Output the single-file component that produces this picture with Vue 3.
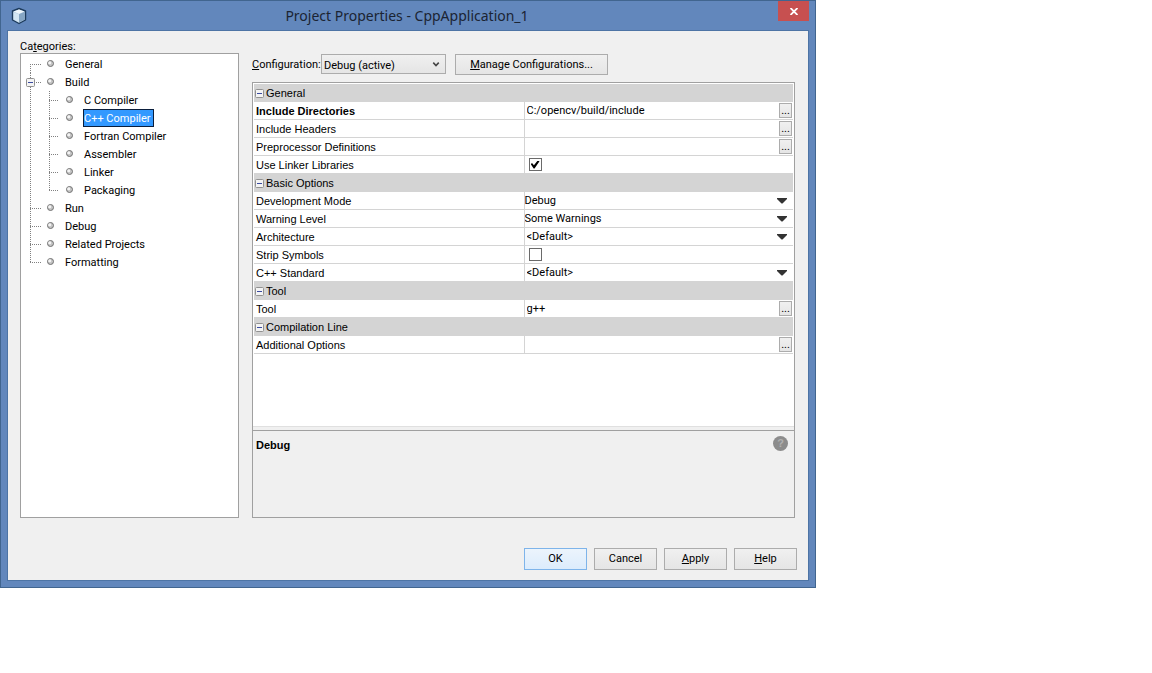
<script setup>
import { ref } from 'vue'

const categories = [
  { name: 'General', depth: 0, first: true },
  { name: 'Build', depth: 0, open: true },
  { name: 'C Compiler', depth: 1 },
  { name: 'C++ Compiler', depth: 1 },
  { name: 'Fortran Compiler', depth: 1 },
  { name: 'Assembler', depth: 1 },
  { name: 'Linker', depth: 1 },
  { name: 'Packaging', depth: 1, last: true },
  { name: 'Run', depth: 0 },
  { name: 'Debug', depth: 0 },
  { name: 'Related Projects', depth: 0 },
  { name: 'Formatting', depth: 0, last: true },
]
const selected = ref('C++ Compiler')
const configuration = ref('Debug (active)')

const groups = ref([
  {
    title: 'General',
    rows: [
      { id: 'include-dirs', label: 'Include Directories', type: 'text', value: 'C:/opencv/build/include', changed: true },
      { id: 'include-headers', label: 'Include Headers', type: 'text', value: '' },
      { id: 'preprocessor', label: 'Preprocessor Definitions', type: 'text', value: '' },
      { id: 'linker-libs', label: 'Use Linker Libraries', type: 'check', value: true },
    ],
  },
  {
    title: 'Basic Options',
    rows: [
      { id: 'dev-mode', label: 'Development Mode', type: 'select', value: 'Debug' },
      { id: 'warnings', label: 'Warning Level', type: 'select', value: 'Some Warnings' },
      { id: 'arch', label: 'Architecture', type: 'select', value: '<Default>' },
      { id: 'strip', label: 'Strip Symbols', type: 'check', value: false },
      { id: 'standard', label: 'C++ Standard', type: 'select', value: '<Default>' },
    ],
  },
  { title: 'Tool', rows: [{ id: 'tool', label: 'Tool', type: 'text', value: 'g++' }] },
  { title: 'Compilation Line', rows: [{ id: 'extra', label: 'Additional Options', type: 'text', value: '' }] },
])
</script>

<template>
  <main class="dialog">
    <header class="titlebar">
      <svg class="app-icon" width="18" height="18" viewBox="0 0 18 18">
        <path d="M9 1.500 15.500 4v9L9 16.500 2.500 13V4z" fill="#a9c3da" stroke="#1d3b5c" stroke-width="1.400" stroke-linejoin="round" />
        <path d="M9 2.500 14.500 4.500 9 7 3.500 4.500z" fill="#eef6fb" />
        <path d="M3.500 5 9 7.300V15.500L3.500 12.500z" fill="#d3e6f3" />
        <path d="M14.500 5 9 7.300V15.500l5.500-3z" fill="#86a6c4" />
      </svg>
      <h1>Project Properties - CppApplication_1</h1>
      <button class="close" aria-label="Close">
        <svg width="8" height="7" viewBox="0 0 8 7"><path d="M.5 0 7.500 7M7.500 0 .5 7" stroke="#fff" stroke-width="1.800" /></svg>
      </button>
    </header>

    <div class="client">
      <div class="columns">
        <nav class="categories" aria-labelledby="cat-label">
          <span id="cat-label" class="cat-label">Ca<u>t</u>egories:</span>
          <ul class="tree">
            <li v-for="c in categories" :key="c.name">
              <svg v-if="c.depth === 0" width="43" height="18" viewBox="0 0 43 18">
                <g stroke="#808080" stroke-dasharray="1 1" fill="none">
                  <path :d="c.first ? 'M9.500 9V18' : c.last ? 'M9.500 0V9' : 'M9.500 0V18'" />
                  <path d="M9 9.500H21" />
                </g>
                <g v-if="c.open">
                  <rect x="5.500" y="5.500" width="8" height="8" rx="1" fill="#f4f4f4" stroke="#919191" />
                  <path d="M7 9.500h5" stroke="#3a4aa0" />
                </g>
                <circle cx="29.500" cy="8.500" r="3" fill="#c4c4c4" stroke="#727272" />
                <circle cx="28.700" cy="7.700" r="1.500" fill="#f4f4f4" />
              </svg>
              <svg v-else width="62" height="18" viewBox="0 0 62 18">
                <g stroke="#808080" stroke-dasharray="1 1" fill="none">
                  <path d="M9.500 0V18" />
                  <path :d="c.last ? 'M28.500 0V9' : 'M28.500 0V18'" />
                  <path d="M28 9.500H38" />
                </g>
                <circle cx="48.500" cy="8.500" r="3" fill="#c4c4c4" stroke="#727272" />
                <circle cx="47.700" cy="7.700" r="1.500" fill="#f4f4f4" />
              </svg>
              <button class="node" :class="{ selected: selected === c.name }" @click="selected = c.name">{{ c.name }}</button>
            </li>
          </ul>
        </nav>

        <section class="settings">
          <div class="config">
            <label for="configuration"><u>C</u>onfiguration:</label>
            <span class="combo">
              <select id="configuration" v-model="configuration"><option>Debug (active)</option></select>
              <svg width="8" height="6" viewBox="0 0 8 6"><path d="M.7.8 4 4.300 7.300.8" fill="none" stroke="#444" stroke-width="1.900" /></svg>
            </span>
            <button class="btn manage"><span><u>M</u>anage Configurations...</span></button>
          </div>

          <div class="sheet">
            <div class="sheet-body">
              <table>
                <colgroup><col class="name-col" /><col /></colgroup>
                <tbody v-for="g in groups" :key="g.title">
                  <tr class="group">
                    <th colspan="2">
                      <div class="group-title">
                        <svg width="9" height="9" viewBox="0 0 9 9">
                          <rect x=".5" y=".5" width="8" height="8" rx="1" fill="#f4f4f4" stroke="#919191" />
                          <path d="M2 4.500h5" stroke="#3a4aa0" />
                        </svg>
                        {{ g.title }}
                      </div>
                    </th>
                  </tr>
                  <tr v-for="r in g.rows" :key="r.id">
                    <td class="name" :class="{ changed: r.changed }"><label :for="r.id">{{ r.label }}</label></td>
                    <td class="value">
                      <div class="cell" :class="r.type">
                        <template v-if="r.type === 'text'">
                          <input :id="r.id" v-model="r.value" type="text" />
                          <button class="more" :aria-label="'Edit ' + r.label">...</button>
                        </template>
                        <template v-else-if="r.type === 'select'">
                          <select :id="r.id" v-model="r.value" :class="{ inherited: r.value === '<Default>' }"><option>{{ r.value }}</option></select>
                          <svg width="10" height="6" viewBox="0 0 10 6"><path d="M0 0h10v1L5.500 5.500h-1L0 1z" fill="#333" /></svg>
                        </template>
                        <input v-else :id="r.id" v-model="r.value" type="checkbox" />
                      </div>
                    </td>
                  </tr>
                </tbody>
              </table>
            </div>
            <div class="description">
              <strong>Debug</strong>
              <button class="help" aria-label="Help on property">?</button>
            </div>
          </div>
        </section>
      </div>

      <footer class="actions">
        <button class="btn primary">OK</button>
        <button class="btn">Cancel</button>
        <button class="btn"><span><u>A</u>pply</span></button>
        <button class="btn"><span><u>H</u>elp</span></button>
      </footer>
    </div>
  </main>
</template>

<style>
body { background: #fff; }
</style>

<style scoped>
* { box-sizing: border-box; }
.dialog {
  max-width: 816px;
  padding: 0 6px 6px;
  border: 1px solid #41658f;
  background: #6287bc;
  color: #000;
  font: 11px/18px Roboto, "Open Sans", sans-serif;
}
button, input, select { font: inherit; color: inherit; margin: 0; padding: 0; border: 0; border-radius: 0; }
svg { display: block; flex: none; }
u { text-underline-offset: 1px; }

.titlebar { display: flex; align-items: center; height: 29px; padding-left: 3px; }
h1 { flex: 1; margin: 0; padding-left: 8px; text-align: center; color: #1b2433; font: 14px/20px "Noto Sans", "Open Sans", sans-serif; }
.close { display: flex; align-items: center; justify-content: center; align-self: flex-start; width: 31px; height: 20px; background: #c75050; }

.client { padding: 7px 11px 10px 12px; border: 1px solid #4d74a5; background: #f0f0f0; }
.columns { display: flex; gap: 13px; }
.categories { display: flex; flex-direction: column; flex: none; width: 219px; }
.cat-label { height: 15px; }
.tree { flex: 1; margin: 0; padding: 1px 0; list-style: none; background: #fff; border: 1px solid #a0a0a0; }
.tree li { display: flex; align-items: center; height: 18px; }
.node { height: 18px; padding: 2px 2px 0 0; border: 1px solid transparent; background: none; line-height: 14px; }
.node.selected { background: #3399ff; border-color: #0a1e3c; color: #fff; }

.settings { flex: 1; min-width: 0; padding-top: 16px; padding-right: 2px; }
.config { display: flex; align-items: flex-start; height: 21px; margin-bottom: 7px; }
.config label { width: 69px; line-height: 21px; white-space: nowrap; }
.combo { display: grid; width: 125px; height: 20px; align-items: center; border: 1px solid #acacac; background: linear-gradient(#f0f0f0, #e5e5e5); }
.combo select { grid-area: 1 / 1; appearance: none; width: 100%; height: 18px; padding: 2px 0 0 2px; background: none; }
.combo svg { grid-area: 1 / 1; justify-self: end; margin-right: 5px; padding-top: 1px; pointer-events: none; }
.btn { height: 22px; width: 63px; border: 1px solid #acacac; background: linear-gradient(#f0f0f0, #e5e5e5); white-space: nowrap; }
.btn.primary { border-color: #7eb4ea; background: linear-gradient(#ecf4fc, #dcecfc); }
.manage { width: 153px; margin-left: 9px; height: 21px; }

.sheet { border: 1px solid #a0a0a0; }
.sheet-body { min-height: 343px; padding: 1px 1px 0; background: #fff; }
table { width: 100%; table-layout: fixed; border-collapse: separate; border-spacing: 0; font: 11px/15px "Liberation Sans", Arial, sans-serif; }
.name-col { width: calc(50% - 1px); }
td, th { height: 18px; padding: 0; border-bottom: 1px solid #d4d4d4; text-align: left; font-weight: normal; }
.group th { padding-top: 2px; background: #d4d4d4; }
.group-title { display: flex; align-items: center; gap: 2px; height: 15px; padding-left: 1px; }
.name { width: 269px; padding: 2px 0 0 2px; }
.name label { display: block; }
.changed { font-weight: bold; }
.value { border-left: 1px solid #d4d4d4; font-family: Roboto, "Open Sans", sans-serif; }
.cell { display: grid; grid-template-columns: 1fr auto; align-items: center; height: 17px; }
.cell input[type='text'] { min-width: 0; width: 100%; height: 17px; padding-left: 2px; background: none; }
.more { width: 13px; height: 15px; margin-right: 1px; border: 1px solid #acacac; background: linear-gradient(#f0f0f0, #e5e5e5); line-height: 12px; }
.cell select { grid-area: 1 / 1 / 2 / 3; appearance: none; width: 100%; height: 17px; background: none; }
.cell select.inherited { padding-left: 2px; }
.cell.select svg { grid-area: 1 / 2; margin-right: 6px; pointer-events: none; }
input[type='checkbox'] { appearance: none; display: grid; place-items: center; width: 13px; height: 13px; margin-left: 4px; border: 1px solid #6a6a6a; background: #fff; }
input[type='checkbox']:checked::before { content: ''; width: 9px; height: 8px; background: #000; clip-path: polygon(0 40%, 20% 35%, 38% 60%, 80% 0, 100% 8%, 45% 100%, 35% 100%); }

.description { display: flex; align-items: flex-start; justify-content: space-between; min-height: 91px; padding: 5px 6px 0 3px; border-top: 1px solid #e0e0e0; font: 11px/18px "Liberation Sans", Arial, sans-serif; background: linear-gradient(#a0a0a0, #a0a0a0) 0 3px / 100% 1px no-repeat #f0f0f0; }
.description strong { padding-top: 4px; }
.help { width: 15px; height: 15px; margin-top: 4px; border-radius: 50%; background: #8c8c8c; color: #b0b0b0; font-weight: bold; line-height: 15px; }

.actions { display: flex; justify-content: flex-end; gap: 7px; margin-top: 30px; }
</style>
